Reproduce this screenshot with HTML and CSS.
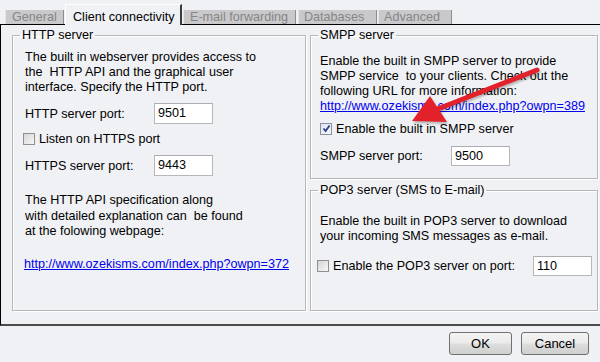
FILE: index.html
```html
<!DOCTYPE html>
<html>
<head>
    <meta charset="UTF-8">
    <title>Client connectivity</title>
    <link rel="stylesheet" href="styles.css">
</head>

<body>
    <div class="tabs">
        <div class="tab general">General</div>
        <div class="tab active">Client connectivity</div>
        <div class="tab email">E-mail forwarding</div>
        <div class="tab databases">Databases</div>
        <div class="tab advanced">Advanced</div>
    </div>

    <div class="panel">
        <fieldset class="box http">
            <legend>HTTP server</legend>
            <p class="text">The built in webserver provides access to<br>the &nbsp;HTTP API and the graphical user<br>interface. Specify the HTTP port.</p>
            <div class="row port-row first">
                <span class="port-label">HTTP server port:</span>
                <span class="field">9501</span>
            </div>
            <div class="row check-row">
                <span class="check"></span>
                <span>Listen on HTTPS port</span>
            </div>
            <div class="row port-row second">
                <span class="port-label">HTTPS server port:</span>
                <span class="field">9443</span>
            </div>
            <p class="text spec">The HTTP API specification along<br>with detailed explanation can &nbsp;be found<br>at the folowing webpage:</p>
            <a class="link http-link" href="#">http://www.ozekisms.com/index.php?owpn=372</a>
        </fieldset>

        <div class="right">
            <fieldset class="box smpp">
                <legend>SMPP server</legend>
                <p class="text">Enable the built in SMPP server to provide<br>SMPP service &nbsp;to your clients. Check out the<br>following URL for more information:<br><a class="link" href="#">http://www.ozekisms.com/index.php?owpn=389</a></p>
                <div class="row check-row">
                    <span class="check checked">
                        <svg width="9" height="9" viewBox="0 0 9 9"><path d="M1.5 4.5 L3.6 7 L7.6 1.5" fill="none" stroke="#2b3d8c" stroke-width="1.8"/></svg>
                    </span>
                    <span>Enable the built in SMPP server</span>
                </div>
                <div class="row port-row">
                    <span class="port-label wide">SMPP server port:</span>
                    <span class="field">9500</span>
                </div>
            </fieldset>

            <fieldset class="box pop3">
                <legend>POP3 server (SMS to E-mail)</legend>
                <p class="text">Enable the built in POP3 server to download<br>your incoming SMS messages as e-mail.</p>
                <div class="row check-row pop-row">
                    <span class="check"></span>
                    <span class="pop-label">Enable the POP3 server on port:</span>
                    <span class="field">110</span>
                </div>
            </fieldset>
        </div>
    </div>

    <div class="buttons">
        <button class="ok">OK</button>
        <button class="cancel">Cancel</button>
    </div>

    <!-- red pointer drawn over the SMPP box -->
    <svg class="arrow" width="600" height="362" viewBox="0 0 600 362">
        <line x1="537" y1="70" x2="430" y2="112" stroke="#e3212b" stroke-width="5" stroke-linecap="round"/>
        <polygon points="412,121 430,96 447,122" fill="#e3212b"/>
    </svg>
</body>
</html>
```

FILE: styles.css
```css
body {
    margin: 0;
    width: 600px;
    height: 362px;
    overflow: hidden;
    position: relative;
    background: #f0f1f5;
    font-family: "Liberation Sans", Arial, sans-serif;
    font-size: 12.6px;
    color: #000;
}

.tabs {
    display: flex;
    align-items: flex-end;
    height: 24px;
    padding-left: 5px;
    gap: 1px;
}
.tab {
    box-sizing: border-box;
    height: 14px;
    line-height: 14px;
    padding-left: 6px;
    white-space: nowrap;
    overflow: hidden;
    background: #c9c9cb;
    color: #858585;
    border-left: 1px solid #e4e4e4;
    border-right: 1px solid #8c8c8c;
}
.tab.general { width: 59px; }
.tab.email { width: 113px; }
.tab.databases { width: 79px; margin-left: 1px; padding-left: 5px; }
.tab.advanced { width: 74px; padding-left: 5px; }
.tab.active {
    position: relative;
    z-index: 1;
    width: 117px;
    height: 21px;
    line-height: 25px;
    margin-bottom: -1px;
    padding-left: 7px;
    background: #f0f1f5;
    color: #000;
    border-top: 1px solid #fff;
    border-left: 1px solid #fff;
    border-right: 2px solid #3c3c3c;
}

.panel {
    box-sizing: border-box;
    width: 620px;
    height: 302px;
    border-top: 1px solid #000;
    border-left: 1px solid #000;
    border-bottom: 2px solid #4b4b4b;
    padding: 3px 0 13px 11px;
    display: grid;
    grid-template-columns: 294px 288px;
    column-gap: 4px;
}

.box {
    margin: 0;
    min-width: 0;
    border: 1px solid #b7b7b9;
    box-shadow: inset 1px 1px 0 #fff, 1px 1px 0 #fff;
    padding: 0 0 0 12px;
}
.box legend {
    padding: 0 2px;
    margin-left: -5px;
    line-height: 15px;
}
.right {
    display: flex;
    flex-direction: column;
    gap: 4px;
}
.smpp, .pop3 { padding-left: 9px; }
.smpp legend, .pop3 legend { margin-left: -2px; }
.smpp { padding-bottom: 12px; }
.pop3 { flex: 1; }

.text {
    margin: 7px 0 0;
    line-height: 15px;
}
.smpp .text { margin-top: 11px; }
.pop3 .text { margin-top: 16px; }
.spec {
    margin-top: 17px;
    line-height: 15.5px;
}

.link {
    color: #0000ee;
    text-decoration: underline;
}
.http-link {
    display: block;
    margin: 17px 0 0 -1px;
    line-height: 15px;
}

.row {
    display: flex;
    align-items: center;
}
.port-row { height: 21px; }
.port-row.first { margin-top: 8px; }
.port-row.second { margin-top: 9px; }
.smpp .port-row { margin-top: 10px; height: 20px; }
.check-row {
    height: 15px;
    margin-top: 7px;
    gap: 4px;
    margin-left: -2px;
}
.smpp .check-row { margin-left: 0; }
.pop-row { height: 20px; margin-top: 12px; margin-left: -3px; }

.port-label { width: 129px; }
.port-label.wide { width: 131px; }
.pop-label { width: 196px; }

.field {
    box-sizing: border-box;
    width: 59px;
    height: 100%;
    padding: 0 3px;
    line-height: 18px;
    background: #fff;
    border: 1px solid #b5b7bd;
    border-top-color: #abadb3;
}

.check {
    box-sizing: border-box;
    width: 12px;
    height: 12px;
    border: 1px solid #8e8f8f;
    background: linear-gradient(135deg, #d6d6d6, #f7f7f7);
    display: flex;
    align-items: center;
    justify-content: center;
}
.check.checked {
    background: linear-gradient(135deg, #dfe5f2, #f7f8fb);
    border-color: #8a8fa0;
}

.buttons {
    display: flex;
    justify-content: flex-end;
    gap: 9px;
    padding-right: 11px;
    margin-top: 6px;
}
.buttons button {
    height: 23px;
    font: inherit;
    font-size: 13px;
    border: 1px solid #707070;
    border-radius: 3px;
    background: linear-gradient(#f3f3f3, #ebebeb 48%, #dddddd 52%, #cfcfcf);
}
.ok { width: 63px; }
.cancel { width: 68px; }

.arrow {
    position: absolute;
    left: 0;
    top: 0;
    pointer-events: none;
    filter: drop-shadow(1px 2px 1px rgba(0,0,0,0.25));
}
```
